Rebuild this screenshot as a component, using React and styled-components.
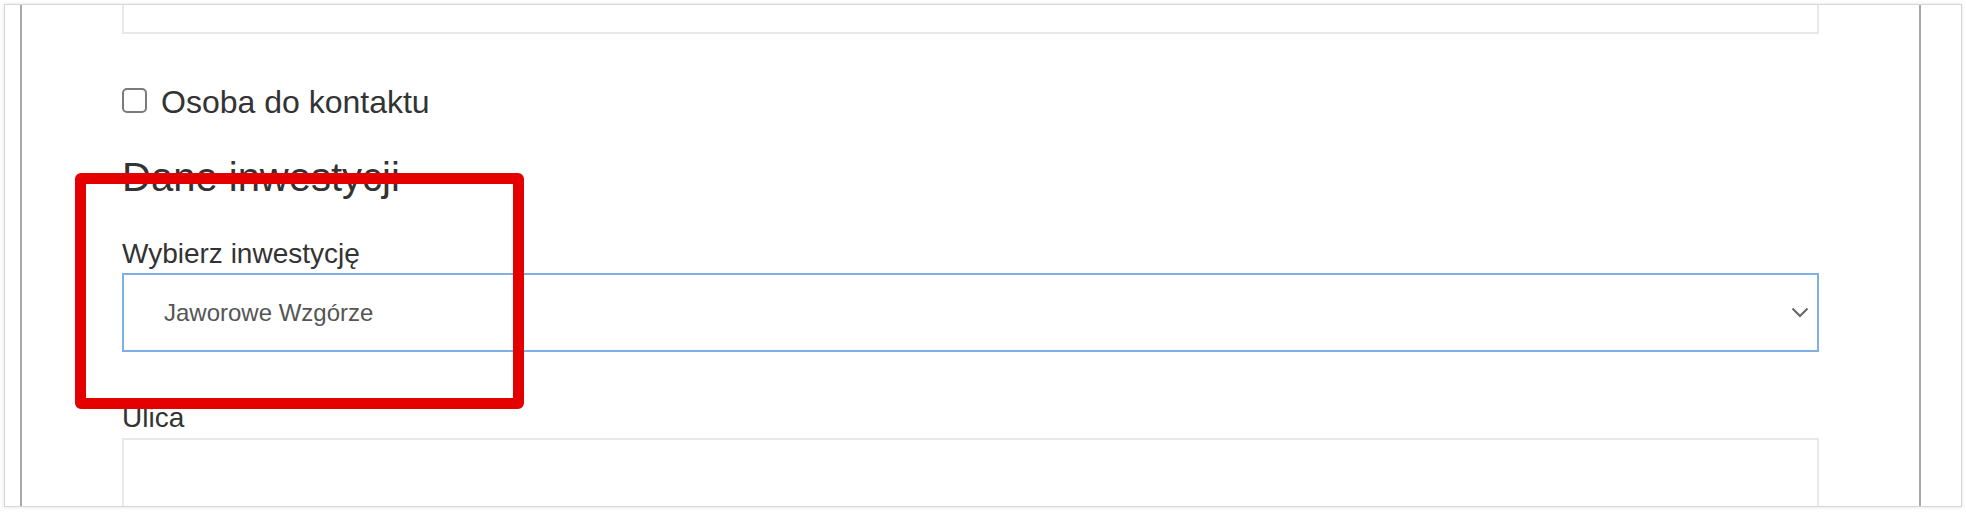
import styled, { createGlobalStyle } from "styled-components"

const GlobalStyle = createGlobalStyle`
  html, body {
    margin: 0;
    padding: 0;
    background: #fff;
  }
  body {
    font-family: "Liberation Sans", Arial, sans-serif;
  }
`

const Page = styled.div`
  padding: 4px;
  width: 1966px;
  height: 512px;
  box-sizing: border-box;
`

const Frame = styled.div`
  position: relative;
  height: 503px;
  border: 1px solid #d6d6d6;
  box-shadow: 0 0 4px rgba(0, 0, 0, 0.12);
  box-sizing: border-box;
  overflow: hidden;
  display: flex;
  padding-left: 15px;
  padding-right: 40px;
`

const Panel = styled.div`
  flex: 1;
  border-left: 2px solid #a8a8a8;
  border-right: 2px solid #a8a8a8;
  padding: 0 100px;
  color: #333;
`

const TextField = styled.div`
  height: 79px;
  border: 2px solid #e8e8e8;
  box-sizing: border-box;
  margin-top: ${p => p.$offset || 0}px;
`

const CheckRow = styled.label`
  display: flex;
  align-items: center;
  gap: 14px;
  margin-top: 50px;
  font-size: 32px;
  line-height: 36px;
`

const Check = styled.input`
  appearance: none;
  margin: 0 0 3px 0;
  width: 25px;
  height: 25px;
  border: 2px solid #7b7b7b;
  border-radius: 5px;
  background: #fff;
  box-sizing: border-box;
`

const Heading = styled.h2`
  margin: 34px 0 0;
  font-size: 40px;
  line-height: 46px;
  font-weight: 400;
  color: #333;
`

const Label = styled.div`
  margin-top: ${p => p.$gap}px;
  margin-bottom: ${p => p.$below}px;
  font-size: 28px;
  line-height: 32px;
  color: #333;
`

const SelectBox = styled.div`
  height: 79px;
  border: 2px solid #7eb0e6;
  box-sizing: border-box;
  display: flex;
  align-items: center;
  justify-content: space-between;
  padding: 0 8px 0 40px;
`

const SelectText = styled.span`
  font-size: 24px;
  color: #555;
`

const Highlight = styled.div`
  position: absolute;
  left: 70px;
  top: 168px;
  width: 449px;
  height: 236px;
  border: 11px solid #e50000;
  border-radius: 6px;
  box-sizing: border-box;
  pointer-events: none;
`

const Chevron = () => (
  <svg width="18" height="11" viewBox="0 0 18 11">
    <polyline points="1.5,1.5 9,9 16.5,1.5" fill="none" stroke="#666" strokeWidth="2" />
  </svg>
)

const App = () => {
  return (
    <Page>
      <GlobalStyle />
      <Frame>
        <Panel>
          <TextField $offset={-50} />
          <CheckRow>
            <Check type="checkbox" />
            Osoba do kontaktu
          </CheckRow>
          <Heading>Dane inwestycji</Heading>
          <Label $gap={38} $below={3}>Wybierz inwestycję</Label>
          <SelectBox>
            <SelectText>Jaworowe Wzgórze</SelectText>
            <Chevron />
          </SelectBox>
          <Label $gap={50} $below={4}>Ulica</Label>
          <TextField />
        </Panel>
        <Highlight />
      </Frame>
    </Page>
  )
}

export default App
